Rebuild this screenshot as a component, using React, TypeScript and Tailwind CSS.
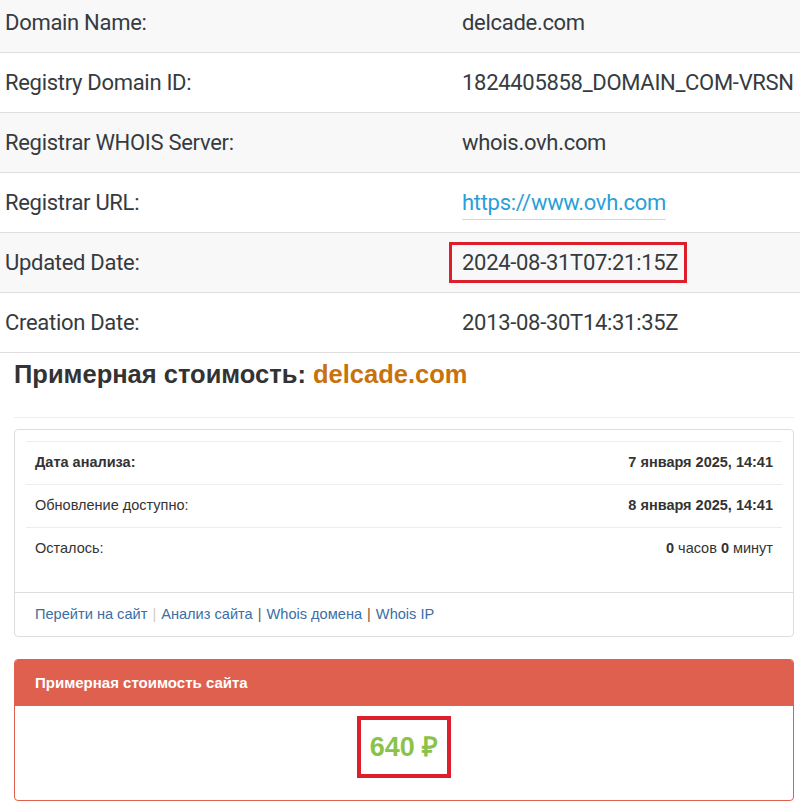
import React from 'react';

const whois = [
  { label: 'Domain Name:', value: 'delcade.com' },
  { label: 'Registry Domain ID:', value: '1824405858_DOMAIN_COM-VRSN' },
  { label: 'Registrar WHOIS Server:', value: 'whois.ovh.com' },
  { label: 'Registrar URL:', value: 'https://www.ovh.com', link: true },
  { label: 'Updated Date:', value: '2024-08-31T07:21:15Z', marked: true },
  { label: 'Creation Date:', value: '2013-08-30T14:31:35Z' },
];

const stats = [
  { label: 'Дата анализа:', value: '7 января 2025, 14:41', boldLabel: true },
  { label: 'Обновление доступно:', value: '8 января 2025, 14:41' },
];

const App = () => {
  return (
    <div className="w-[800px] h-[806px] overflow-hidden bg-white">
      {/* whois table */}
      <div className="-mt-[7px] font-['Roboto',sans-serif] text-[22px] tracking-[-0.3px] text-[#363b41] whitespace-nowrap">
        {whois.map((row, i) => (
          <div
            key={row.label}
            className={
              'flex items-center h-[60px] border-b border-[#dedede] ' +
              (i % 2 === 0 ? 'bg-[#f8f8f8]' : 'bg-white')
            }
          >
            <div className="w-[449px] pl-[5px]">{row.label}</div>
            <div>
              {row.link ? (
                <a className="ml-[13px] text-[#2a9fd8] border-b border-[#c5dbe8] pb-[4px]">{row.value}</a>
              ) : row.marked ? (
                <span className="inline-block border-[3px] border-[#dc1f2b] pl-[10px] pr-[6px] py-[1px]">
                  {row.value}
                </span>
              ) : (
                <span className="ml-[13px]">{row.value}</span>
              )}
            </div>
          </div>
        ))}
      </div>

      <div className="ml-[14px] w-[780px] font-['Liberation_Sans',Arial,sans-serif] text-[#333]">
        <h2 className="mt-[6px] h-[30px] leading-[30px] text-[25.5px] font-bold text-[#333]">
          Примерная стоимость: <span className="text-[#c8720e]">delcade.com</span>
        </h2>
        <div className="mt-[28px] border-t border-[#eee]" />

        {/* analysis card */}
        <div className="mt-[11px] border border-[#ddd] rounded-[4px] bg-white">
          <div className="p-[11px] pb-[22px]">
            <div className="text-[14.5px]">
              {stats.map((s) => (
                <div key={s.label} className="flex justify-between items-center h-[43px] px-[9px] border-t border-[#eee]">
                  <span className={s.boldLabel ? 'font-bold' : ''}>{s.label}</span>
                  <span className="font-bold">{s.value}</span>
                </div>
              ))}
              <div className="flex justify-between items-center h-[43px] px-[9px] border-t border-[#eee]">
                <span>Осталось:</span>
                <span>
                  <b>0</b> часов <b>0</b> минут
                </span>
              </div>
            </div>
          </div>
          <div className="h-[44px] flex items-center px-[20px] border-t border-[#ddd] text-[14.6px] text-[#3a6ea5]">
            <a>Перейти на сайт</a>
            <span className="mx-[5px] text-[#d7cbbf]">|</span>
            <a>Анализ сайта</a>
            <span className="mx-[5px] text-[#7a5a3a]">|</span>
            <a>Whois домена</a>
            <span className="mx-[5px] text-[#7a5a3a]">|</span>
            <a>Whois IP</a>
          </div>
        </div>

        {/* price panel */}
        <div className="mt-[22px] border border-[#e0604f] rounded-[4px] overflow-hidden">
          <div className="h-[46px] flex items-center px-[20px] bg-[#e0604f] text-white text-[15px] font-bold">
            Примерная стоимость сайта
          </div>
          <div className="h-[94px] flex justify-center pt-[10px]">
            <span className="inline-block self-start border-[4px] border-[#dc1f2b] px-[9px] py-[12px] leading-[30px] text-[27px] font-bold text-[#8bc34a]">
              640 ₽
            </span>
          </div>
        </div>
      </div>
    </div>
  );
};

export default App;
